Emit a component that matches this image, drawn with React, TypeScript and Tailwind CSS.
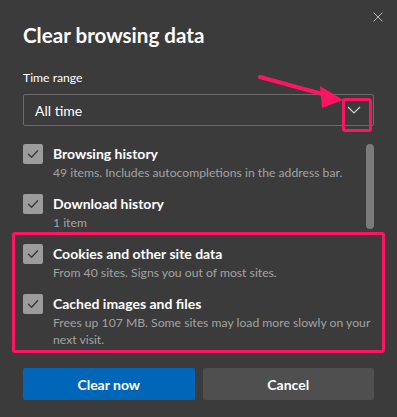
import React from "react";

function Check() {
  return (
    <div className="w-5 h-5 rounded-[2px] bg-[#9c9c9c] flex items-center justify-center shrink-0">
      <svg width="14" height="14" viewBox="0 0 14 14" fill="none">
        <path d="M2.5 7.3 L5.6 10.3 L11.6 3.8" stroke="#3b3b3b" strokeWidth="1.4" strokeLinecap="round" strokeLinejoin="round" />
      </svg>
    </div>
  );
}

function Item({ title, sub }: { title: string; sub: string }) {
  return (
    <div className="flex gap-[10px] h-[50px]">
      <Check />
      <div className="flex flex-col pt-[1px]">
        <div className="text-[14px] leading-[18px] font-bold text-white">{title}</div>
        <div className="text-[12.2px] leading-[17px] text-[#a3a3a3] mt-[1px]">{sub}</div>
      </div>
    </div>
  );
}

export default function App() {
  return (
    <div
      className="relative w-[397px] h-[417px] bg-[#3b3b3b] overflow-hidden"
      style={{ fontFamily: 'Lato, "Noto Sans", sans-serif' }}
    >
      <div className="absolute top-[12px] right-[14px] w-[10px] h-[10px]">
        <svg width="10" height="10" viewBox="0 0 10 10">
          <path d="M0.5 0.5 L9.5 9.5 M9.5 0.5 L0.5 9.5" stroke="#b5b5b5" strokeWidth="1" />
        </svg>
      </div>

      <div className="pl-[23px] pr-[23px] pt-[21px]">
        <div className="text-[20.6px] leading-[28px] font-bold text-white">Clear browsing data</div>
        <div className="mt-[20px] text-[12.2px] leading-[17px] text-white">Time range</div>
        <div className="mt-[8px] h-[32px] border border-[#6b6b6b] rounded-[2px] flex items-center justify-between pl-[11px] pr-[12px]">
          <span className="text-[14px] text-white">All time</span>
          <svg width="14" height="8" viewBox="0 0 14 8">
            <path d="M1 1 L7 7 L13 1" stroke="#d0d0d0" strokeWidth="1.2" fill="none" />
          </svg>
        </div>

        <div className="relative mt-[18px]">
          <Item title="Browsing history" sub="49 items. Includes autocompletions in the address bar." />
          <Item title="Download history" sub="1 item" />
          <div className="absolute right-[0px] top-[0px] w-[8px] h-[85px] rounded-full bg-[#7b7b7b]" />
          <div className="-mx-[11px] mt-[-12px] border-[3px] border-[#ff1463] rounded-[3px] pl-[8px] pt-[9px] h-[121px]">
            <Item title="Cookies and other site data" sub="From 40 sites. Signs you out of most sites." />
            <div className="flex gap-[10px]">
              <Check />
              <div className="flex flex-col pt-[1px]">
                <div className="text-[14px] leading-[18px] font-bold text-white">Cached images and files</div>
                <div className="text-[12.2px] leading-[17px] text-[#a3a3a3] mt-[1px] w-[320px]">
                  Frees up 107 MB. Some sites may load more slowly on your next visit.
                </div>
              </div>
            </div>
          </div>
        </div>

        <div className="mt-[15px] flex gap-[8px]">
          <button className="w-[172px] h-[32px] rounded-[2px] bg-[#0067b8] text-white text-[14px] font-bold">Clear now</button>
          <button className="w-[172px] h-[32px] rounded-[2px] bg-[#4f4f4f] text-white text-[14px] font-bold">Cancel</button>
        </div>
      </div>

      <div className="absolute left-[342px] top-[98px] w-[30px] h-[34px] border-[3px] border-[#ff1463] rounded-[3px]" />
      <svg className="absolute left-0 top-0" width="397" height="417" viewBox="0 0 397 417">
        <path d="M260 77 L326 95" stroke="#ff1463" strokeWidth="4" strokeLinecap="round" />
        <path d="M343 100 L320 86 L322 108 Z" fill="#ff1463" />
      </svg>
    </div>
  );
}
